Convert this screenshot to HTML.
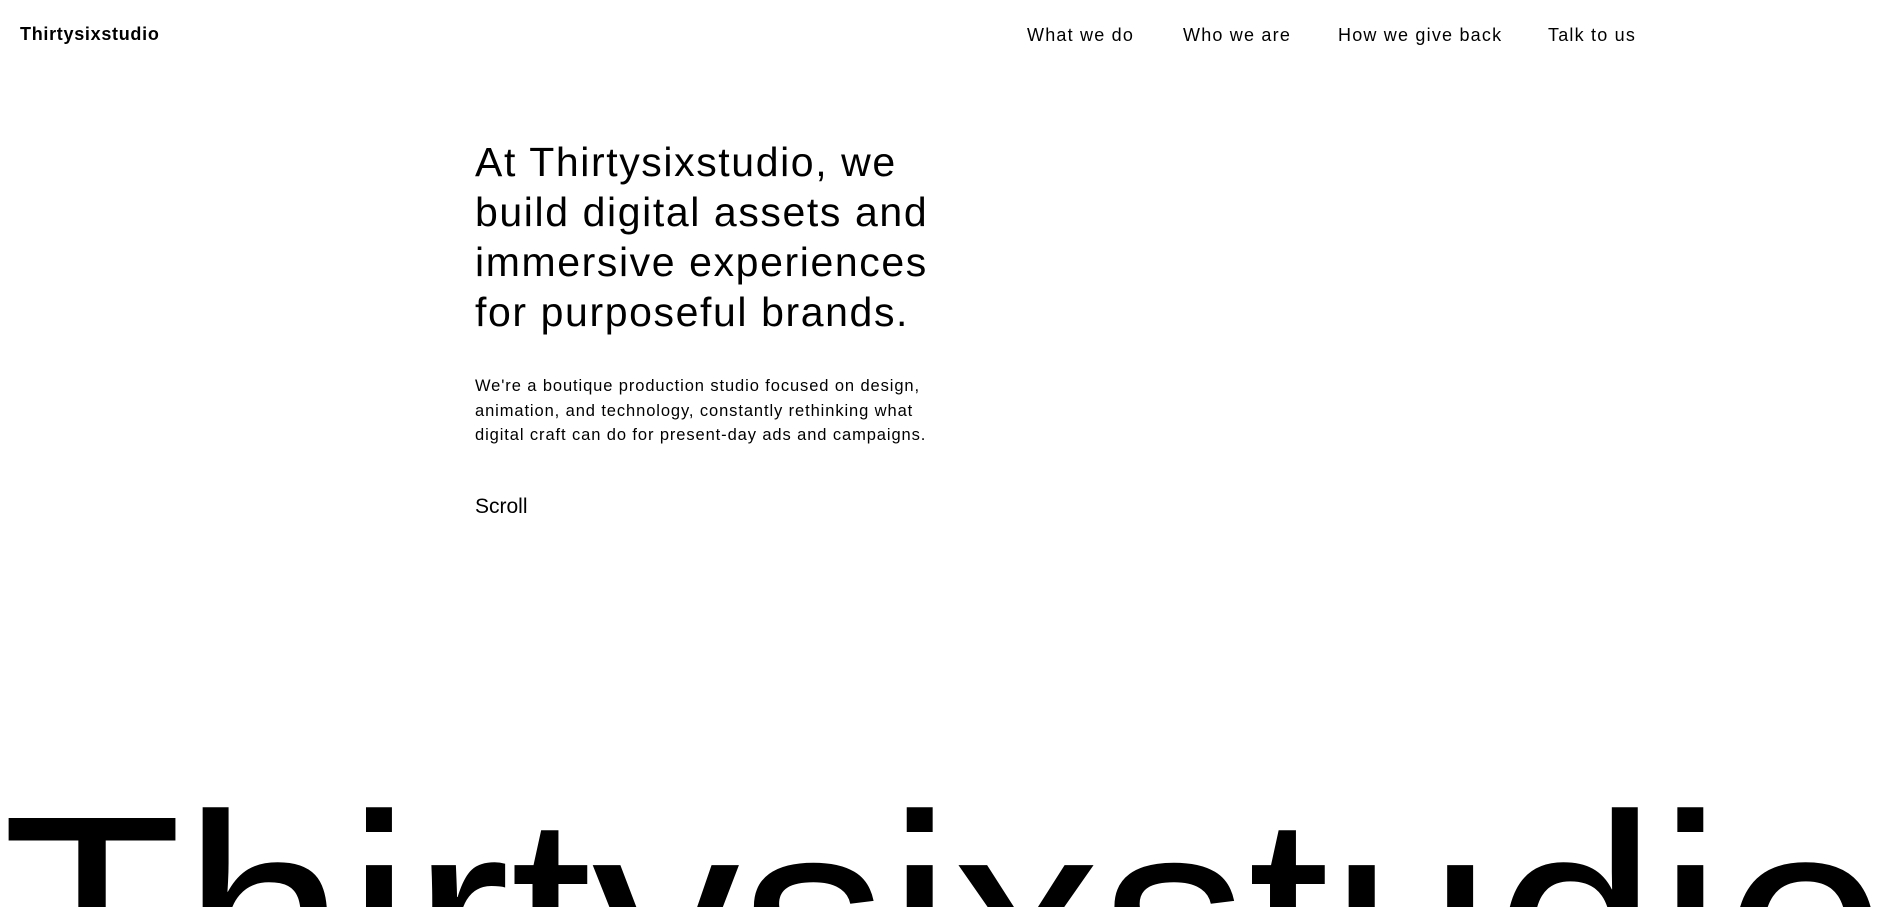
<!DOCTYPE html>
<html><head><meta charset="utf-8"><style>
html,body{margin:0;padding:0;width:1899px;height:907px;overflow:hidden;background:#fff;color:#000;font-family:"Liberation Sans",Arial,sans-serif}
.wrap{position:relative;width:1899px;height:907px;overflow:hidden}
.logo{position:absolute;left:20px;top:24px;font-size:18px;font-weight:bold;letter-spacing:0.7px}
.nav a{position:absolute;top:25px;font-size:18px;color:#000;text-decoration:none;white-space:nowrap;letter-spacing:1.2px}
h1{position:absolute;left:475px;top:137px;margin:0;font-weight:normal;font-size:41px;line-height:50px;letter-spacing:1.6px}
p{position:absolute;left:475px;top:374px;margin:0;font-size:16.5px;line-height:24.5px;letter-spacing:0.9px}
.scroll{position:absolute;left:475px;top:495px;font-size:21px}
.big{position:absolute;left:2px;top:772px;font-size:295px;line-height:1;white-space:nowrap;letter-spacing:0}
</style></head><body><div class="wrap">
<div class="logo">Thirtysixstudio</div>
<div class="nav">
<a style="left:1027px">What we do</a>
<a style="left:1183px">Who we are</a>
<a style="left:1338px">How we give back</a>
<a style="left:1548px">Talk to us</a>
</div>
<h1>At Thirtysixstudio, we<br>build digital assets and<br>immersive experiences<br>for purposeful brands.</h1>
<p>We're a boutique production studio focused on design,<br>animation, and technology, constantly rethinking what<br>digital craft can do for present-day ads and campaigns.</p>
<div class="scroll">Scroll</div>
<div class="big">Thirtysixstudio</div>
</div></body></html>
